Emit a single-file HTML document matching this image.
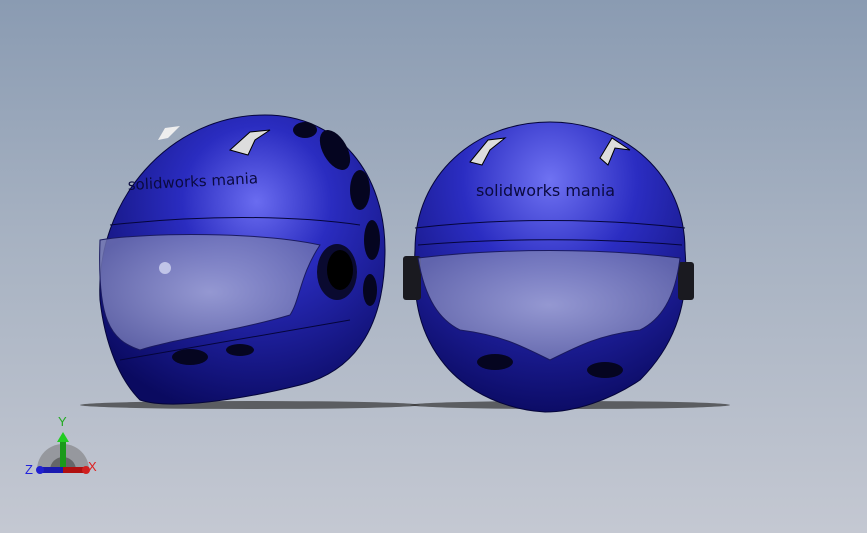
<!DOCTYPE html>
<html><head><style>
html,body{margin:0;padding:0;width:867px;height:533px;overflow:hidden}
body{background:linear-gradient(#8a9bb2 0%,#a7b2c2 45%,#c4c8d2 100%)}
</style></head><body>
<svg width="867" height="533" viewBox="0 0 867 533" style="position:absolute;left:0;top:0">
<defs>
<radialGradient id="hb" cx="0.55" cy="0.3" r="0.75">
<stop offset="0" stop-color="#6a6cf0"/><stop offset="0.35" stop-color="#2a2cc0"/><stop offset="1" stop-color="#0a0a60"/>
</radialGradient>
<radialGradient id="hb2" cx="0.5" cy="0.2" r="0.8">
<stop offset="0" stop-color="#6f72f2"/><stop offset="0.4" stop-color="#2b2dc2"/><stop offset="1" stop-color="#0c0c66"/>
</radialGradient>
<radialGradient id="vis" cx="0.5" cy="0.5" r="0.6">
<stop offset="0" stop-color="#a8acd8" stop-opacity="0.85"/><stop offset="1" stop-color="#6c70b0" stop-opacity="0.85"/>
</radialGradient>
</defs>
<ellipse cx="250" cy="405" rx="170" ry="4" fill="#333" opacity="0.7"/>
<ellipse cx="570" cy="405" rx="160" ry="4" fill="#333" opacity="0.7"/>
<path d="M100,300 C95,200 170,115 265,115 C340,115 385,175 385,250 C385,320 360,370 300,385 C240,400 170,410 140,400 C120,380 105,345 100,300Z" fill="url(#hb)" stroke="#05053a"/>
<path d="M120,360 C180,350 260,335 350,320" stroke="#05053a" fill="none"/>
<path d="M110,225 C200,215 290,215 360,225" stroke="#05053a" fill="none"/>
<ellipse cx="335" cy="150" rx="12" ry="22" fill="#050520" transform="rotate(-30 335 150)"/>
<ellipse cx="360" cy="190" rx="10" ry="20" fill="#050520"/>
<ellipse cx="372" cy="240" rx="8" ry="20" fill="#050520"/>
<ellipse cx="370" cy="290" rx="7" ry="16" fill="#050520"/>
<ellipse cx="305" cy="130" rx="12" ry="8" fill="#050520"/>
<ellipse cx="190" cy="357" rx="18" ry="8" fill="#050520"/>
<ellipse cx="240" cy="350" rx="14" ry="6" fill="#050520"/>
<path d="M230,150 L250,132 L270,130 L255,140 L248,155Z" fill="#ddd" stroke="#000"/>
<path d="M158,140 L165,128 L180,126 L168,138Z" fill="#eee"/>
<text x="128" y="190" font-family="DejaVu Sans,sans-serif" font-size="15" fill="#0a0a40" transform="rotate(-3 128 190)">solidworks mania</text>
<path d="M100,240 C150,232 260,232 320,245 C300,275 300,300 290,315 C240,330 170,340 140,350 C110,340 97,320 100,240Z" fill="url(#vis)" stroke="#1a1a60"/>
<ellipse cx="337" cy="272" rx="20" ry="28" fill="#0a0a30"/>
<ellipse cx="340" cy="270" rx="13" ry="20" fill="#000"/>
<circle cx="165" cy="268" r="6" fill="#c0c4e8"/>
<path d="M415,250 C415,175 475,122 550,122 C625,122 685,175 685,250 C690,310 670,350 640,380 C610,400 575,412 545,412 C510,410 470,395 445,365 C420,335 412,300 415,250Z" fill="url(#hb2)" stroke="#05053a"/>
<path d="M415,228 C500,218 600,218 685,228" stroke="#05053a" fill="none"/>
<path d="M418,245 C500,238 600,238 682,245" stroke="#05053a" fill="none"/>
<rect x="403" y="256" width="18" height="44" rx="3" fill="#1a1a20"/>
<rect x="678" y="262" width="16" height="38" rx="3" fill="#1a1a20"/>
<path d="M418,258 C500,248 600,248 680,258 C675,300 660,320 640,330 C600,335 580,345 550,360 C520,345 500,335 460,330 C440,320 425,300 418,258Z" fill="url(#vis)" stroke="#1a1a60"/>
<ellipse cx="495" cy="362" rx="18" ry="8" fill="#050520"/>
<ellipse cx="605" cy="370" rx="18" ry="8" fill="#050520"/>
<path d="M470,162 L488,140 L505,138 L490,150 L482,165Z" fill="#ddd" stroke="#000"/>
<path d="M600,158 L612,138 L630,150 L615,148 L608,165Z" fill="#ddd" stroke="#000"/>
<text x="476" y="196" font-family="DejaVu Sans,sans-serif" font-size="16" fill="#0a0a40">solidworks mania</text>
<path d="M37,470 A26,26 0 0 1 89,470Z" fill="#777" opacity="0.55"/>
<path d="M50,470 A13,13 0 0 1 76,470Z" fill="#444" opacity="0.6"/>
<rect x="60" y="440" width="6" height="30" fill="#1a9a1a"/>
<path d="M57,442 L63,432 L69,442Z" fill="#22cc22"/>
<rect x="40" y="467" width="25" height="6" fill="#1a1ab0"/>
<circle cx="40" cy="470" r="4" fill="#2020d0"/>
<rect x="63" y="467" width="24" height="6" fill="#b01010"/>
<circle cx="86" cy="470" r="4" fill="#d02020"/>
<text x="58" y="426" font-family="Liberation Sans,sans-serif" font-size="13" fill="#2a2">Y</text>
<text x="25" y="474" font-family="Liberation Sans,sans-serif" font-size="13" fill="#22d">Z</text>
<text x="88" y="471" font-family="Liberation Sans,sans-serif" font-size="13" fill="#d22">X</text>
</svg>
</body></html>
